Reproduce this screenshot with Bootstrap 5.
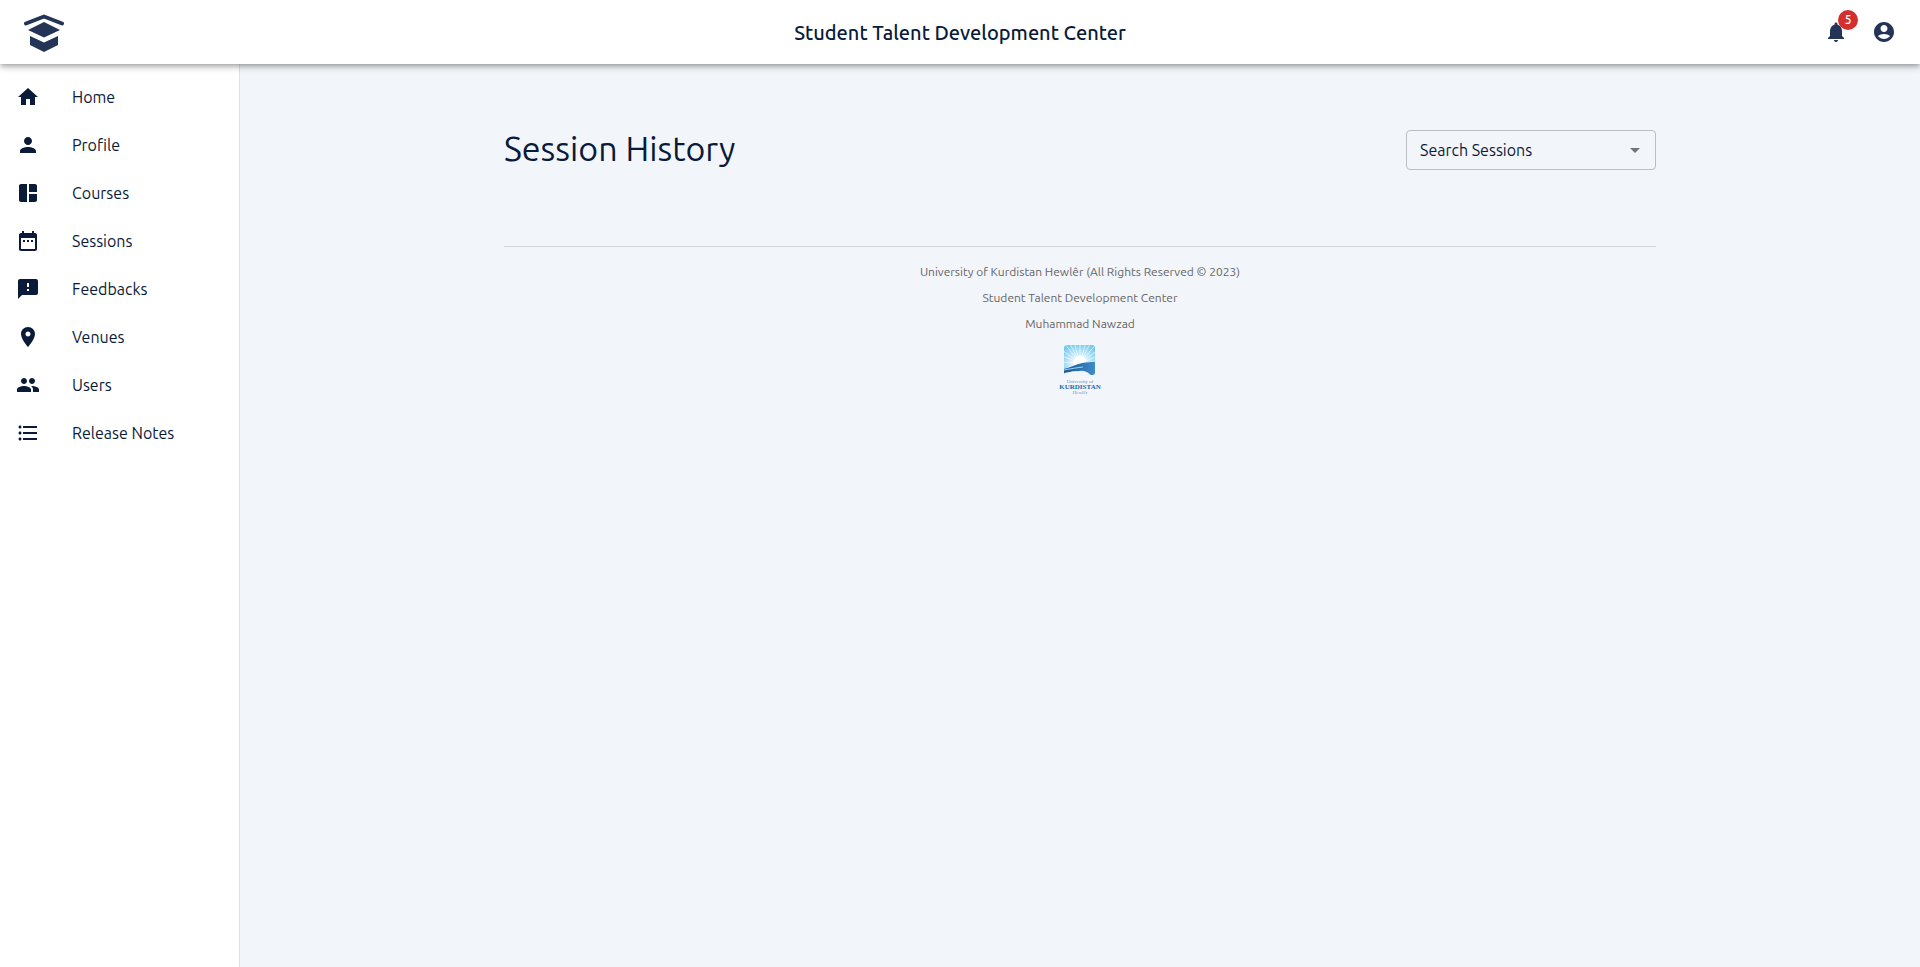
<!DOCTYPE html>
<html lang="en">
<head>
<meta charset="utf-8">
<meta name="viewport" content="width=device-width, initial-scale=1">
<title>Student Talent Development Center</title>
<link href="https://cdn.jsdelivr.net/npm/bootstrap@5.3.0/dist/css/bootstrap.min.css" rel="stylesheet">
<style>
  :root { --ink: #0a1b3a; --ink-soft: #233457; --page: #f2f5fa; }
  body { font-family: Ubuntu, "Noto Sans", "Open Sans", sans-serif; font-size: 16px; line-height: 24px; color: var(--ink); background: var(--page); }
  svg { display: block; fill: currentColor; }
  .app-bar { height: 64px; box-shadow: 0 2px 4px -1px rgba(0,0,0,.2), 0 4px 5px rgba(0,0,0,.14), 0 1px 10px rgba(0,0,0,.12); }
  .app-side { flex: 1 1 0; color: var(--ink-soft); }
  .app-title { font-size: 20px; line-height: 32px; font-weight: 500; padding-top: 2px; }
  .icon-btn { color: var(--ink-soft); line-height: 0; }
  .count-badge { position: absolute; top: -2px; right: -2px; width: 20px; height: 20px; font-size: 12px; line-height: 20px; font-weight: 500; color: #fff; background: #d32f2f; }
  .drawer { width: 240px; flex: none; padding-top: 9px; border-right: 1px solid #e0e0e0; }
  .drawer .nav-link { display: flex; align-items: center; height: 48px; padding: 0 16px; gap: 32px; color: var(--ink); }
  .drawer .nav-link:hover { background: #f5f5f5; }
  .page-wrap { max-width: 1200px; padding: 66px 24px 24px; }
  .page-title { font-size: 34px; line-height: 36px; font-weight: 400; }
  .page-head { margin-bottom: 76px; }
  .session-select { width: 250px; height: 40px; padding: 0 40px 0 13px; color: var(--ink); border: 1px solid #b9bec4; border-radius: 4px; background-color: transparent;
    background-image: url("data:image/svg+xml,%3Csvg xmlns='http://www.w3.org/2000/svg' viewBox='0 0 24 24'%3E%3Cpath fill='%23717479' d='M7 10l5 5 5-5z'/%3E%3C/svg%3E"); background-size: 24px; background-position: right 8px center; }
  .page-foot { border-top: 1px solid #d2d6da; padding-top: 12px; font-size: 12px; line-height: 26px; color: #666; }
</style>
</head>
<body class="d-flex flex-column min-vh-100">
<header class="app-bar bg-white d-flex align-items-center px-4 sticky-top">
  <div class="app-side d-flex">
    <a href="#" class="text-reset" aria-label="Home page">
      <svg width="40" height="40" viewBox="0 0 40 40"><path d="M2 11.500L20 4.500L38 11.500" fill="none" stroke="currentColor" stroke-width="4" stroke-linecap="round" stroke-linejoin="round"/><path d="M4 18L20 10L36 18L20 25.500z"/><path d="M6 24L20 30.500L34 24V33L20 40L6 33z"/></svg>
    </a>
  </div>
  <div class="app-title">Student Talent Development Center</div>
  <div class="app-side d-flex justify-content-end">
    <button type="button" class="icon-btn btn border-0 position-relative p-2 me-3" aria-label="5 notifications">
      <svg width="24" height="24" viewBox="0 0 24 24"><path d="M12 22c1.100 0 2-.9 2-2h-4c0 1.100.89 2 2 2zm6-6v-5c0-3.070-1.640-5.640-4.500-6.320V4c0-.83-.67-1.500-1.500-1.500s-1.500.67-1.500 1.500v.68C7.630 5.360 6 7.920 6 11v5l-2 2v1h16v-1l-2-2z"/></svg>
      <span class="count-badge rounded-circle text-center">5</span>
    </button>
    <button type="button" class="icon-btn btn border-0 p-0" aria-label="Account">
      <svg width="24" height="24" viewBox="0 0 24 24"><path d="M12 2C6.480 2 2 6.480 2 12s4.480 10 10 10 10-4.480 10-10S17.520 2 12 2zm0 3c1.930 0 3.500 1.570 3.500 3.500S13.930 12 12 12s-3.500-1.570-3.500-3.500S10.070 5 12 5zm0 14c-2.030 0-4.430-.82-6.140-2.880C7.550 14.800 9.680 14 12 14s4.450.8 6.140 2.120C16.430 18.180 14.030 19 12 19z"/></svg>
    </button>
  </div>
</header>

<div class="d-flex flex-grow-1">
  <nav class="drawer bg-white" aria-label="Main">
    <ul class="nav flex-column">
      <li><a class="nav-link" href="#"><svg width="24" height="24" viewBox="0 0 24 24"><path d="M10 20v-6h4v6h5v-8h3L12 3 2 12h3v8z"/></svg>Home</a></li>
      <li><a class="nav-link" href="#"><svg width="24" height="24" viewBox="0 0 24 24"><path d="M12 12c2.210 0 4-1.790 4-4s-1.790-4-4-4-4 1.790-4 4 1.790 4 4 4zm0 2c-2.670 0-8 1.340-8 4v2h16v-2c0-2.660-5.330-4-8-4z"/></svg>Profile</a></li>
      <li><a class="nav-link" href="#"><svg width="24" height="24" viewBox="0 0 24 24"><path d="M11 21H5c-1.100 0-2-.9-2-2V5c0-1.100.9-2 2-2h6v18zm2 0h6c1.100 0 2-.9 2-2v-6h-8v8zm8-10V5c0-1.100-.9-2-2-2h-6v8h8z"/></svg>Courses</a></li>
      <li><a class="nav-link" href="#"><svg width="24" height="24" viewBox="0 0 24 24"><path d="M9 11H7v2h2v-2zm4 0h-2v2h2v-2zm4 0h-2v2h2v-2zm2-7h-1V2h-2v2H8V2H6v2H5c-1.110 0-1.990.9-1.990 2L3 20c0 1.100.89 2 2 2h14c1.100 0 2-.9 2-2V6c0-1.100-.9-2-2-2zm0 16H5V9h14v11z"/></svg>Sessions</a></li>
      <li><a class="nav-link" href="#"><svg width="24" height="24" viewBox="0 0 24 24"><path d="M20 2H4c-1.100 0-1.990.9-1.990 2L2 22l4-4h14c1.100 0 2-.9 2-2V4c0-1.100-.9-2-2-2zm-7 12h-2v-2h2v2zm0-4h-2V6h2v4z"/></svg>Feedbacks</a></li>
      <li><a class="nav-link" href="#"><svg width="24" height="24" viewBox="0 0 24 24"><path d="M12 2C8.130 2 5 5.130 5 9c0 5.250 7 13 7 13s7-7.750 7-13c0-3.870-3.130-7-7-7zm0 9.500c-1.380 0-2.500-1.120-2.500-2.500s1.120-2.500 2.500-2.500 2.500 1.120 2.500 2.500-1.120 2.500-2.500 2.500z"/></svg>Venues</a></li>
      <li><a class="nav-link" href="#"><svg width="24" height="24" viewBox="0 0 24 24"><path d="M16 11c1.660 0 2.990-1.340 2.990-3S17.660 5 16 5s-3 1.340-3 3 1.340 3 3 3zm-8 0c1.660 0 2.990-1.340 2.990-3S9.660 5 8 5 5 6.340 5 8s1.340 3 3 3zm0 2c-2.330 0-7 1.170-7 3.500V19h14v-2.500c0-2.330-4.670-3.500-7-3.500zm8 0c-.29 0-.62.020-.97.050 1.160.84 1.970 1.970 1.970 3.450V19h6v-2.500c0-2.330-4.670-3.500-7-3.500z"/></svg>Users</a></li>
      <li><a class="nav-link" href="#"><svg width="24" height="24" viewBox="0 0 24 24"><path d="M4 10.500c-.83 0-1.500.67-1.500 1.500s.67 1.500 1.500 1.500 1.500-.67 1.500-1.500-.67-1.500-1.500-1.500zm0-6c-.83 0-1.500.67-1.500 1.500S3.170 7.500 4 7.500 5.500 6.830 5.500 6 4.830 4.500 4 4.500zm0 12c-.83 0-1.500.68-1.500 1.500s.68 1.500 1.500 1.500 1.500-.68 1.500-1.500-.67-1.500-1.500-1.500zM7 19h14v-2H7v2zm0-6h14v-2H7v2zm0-8v2h14V5H7z"/></svg>Release Notes</a></li>
    </ul>
  </nav>

  <main class="flex-grow-1">
    <div class="page-wrap mx-auto">
      <div class="page-head d-flex justify-content-between align-items-start">
        <h1 class="page-title mb-0">Session History</h1>
        <select class="session-select form-select" aria-label="Search Sessions">
          <option>Search Sessions</option>
        </select>
      </div>
      <footer class="page-foot d-flex flex-column align-items-center">
        <div>University of Kurdistan Hewlêr (All Rights Reserved © 2023)</div>
        <div>Student Talent Development Center</div>
        <div>Muhammad Nawzad</div>
        <svg class="mt-1" width="46" height="54" viewBox="0 0 46 54" role="img" aria-label="University of Kurdistan Hewlêr">
          <defs>
            <radialGradient id="sky" cx="50%" cy="62%" r="70%"><stop offset="0" stop-color="#fff"/><stop offset=".3" stop-color="#e4f5fc"/><stop offset="1" stop-color="#6fc8f0"/></radialGradient>
            <linearGradient id="hill"><stop offset="0" stop-color="#1a5795"/><stop offset="1" stop-color="#3f8bc8"/></linearGradient>
            <clipPath id="frame"><rect x="7" y="4" width="31" height="30" rx="3"/></clipPath>
          </defs>
          <g clip-path="url(#frame)">
            <rect x="7" y="4" width="31" height="30" fill="url(#sky)"/>
            <g stroke="#fff" stroke-opacity=".6" stroke-width="1"><path d="M23 22L5 21M23 22L5 15M23 22L5 9M23 22L7 2M23 22L12 1M23 22L17 1M23 22V1M23 22L29 1M23 22L34 1M23 22L40 2M23 22L41 9M23 22L41 15M23 22L41 21"/></g>
            <circle cx="23" cy="21" r="6" fill="#fff"/>
            <path d="M7 28C13 27 19 23 25 22C30 21 33 21 38 21V34H34C31 31 27 29 22 30C17 30 12 31 7 33z" fill="url(#hill)"/>
            <path d="M7 29Q17 27 26 26" fill="none" stroke="#9fd4ef"/>
            <path d="M7 32C13 31 17 30 22 31C27 30 31 31 33 34H7z" fill="#f2f5fa"/>
          </g>
          <g text-anchor="middle" font-family="Liberation Serif, serif">
            <text x="23" y="42" font-size="5" fill="#5b93c4">University of</text>
            <text x="23" y="48" font-size="7" font-weight="700" fill="#1668b0">KURDISTAN</text>
            <text x="23" y="53" font-size="5" fill="#5b93c4">Hewlêr</text>
          </g>
        </svg>
      </footer>
    </div>
  </main>
</div>
<script src="https://cdn.jsdelivr.net/npm/bootstrap@5.3.0/dist/js/bootstrap.bundle.min.js"></script>
</body>
</html>
